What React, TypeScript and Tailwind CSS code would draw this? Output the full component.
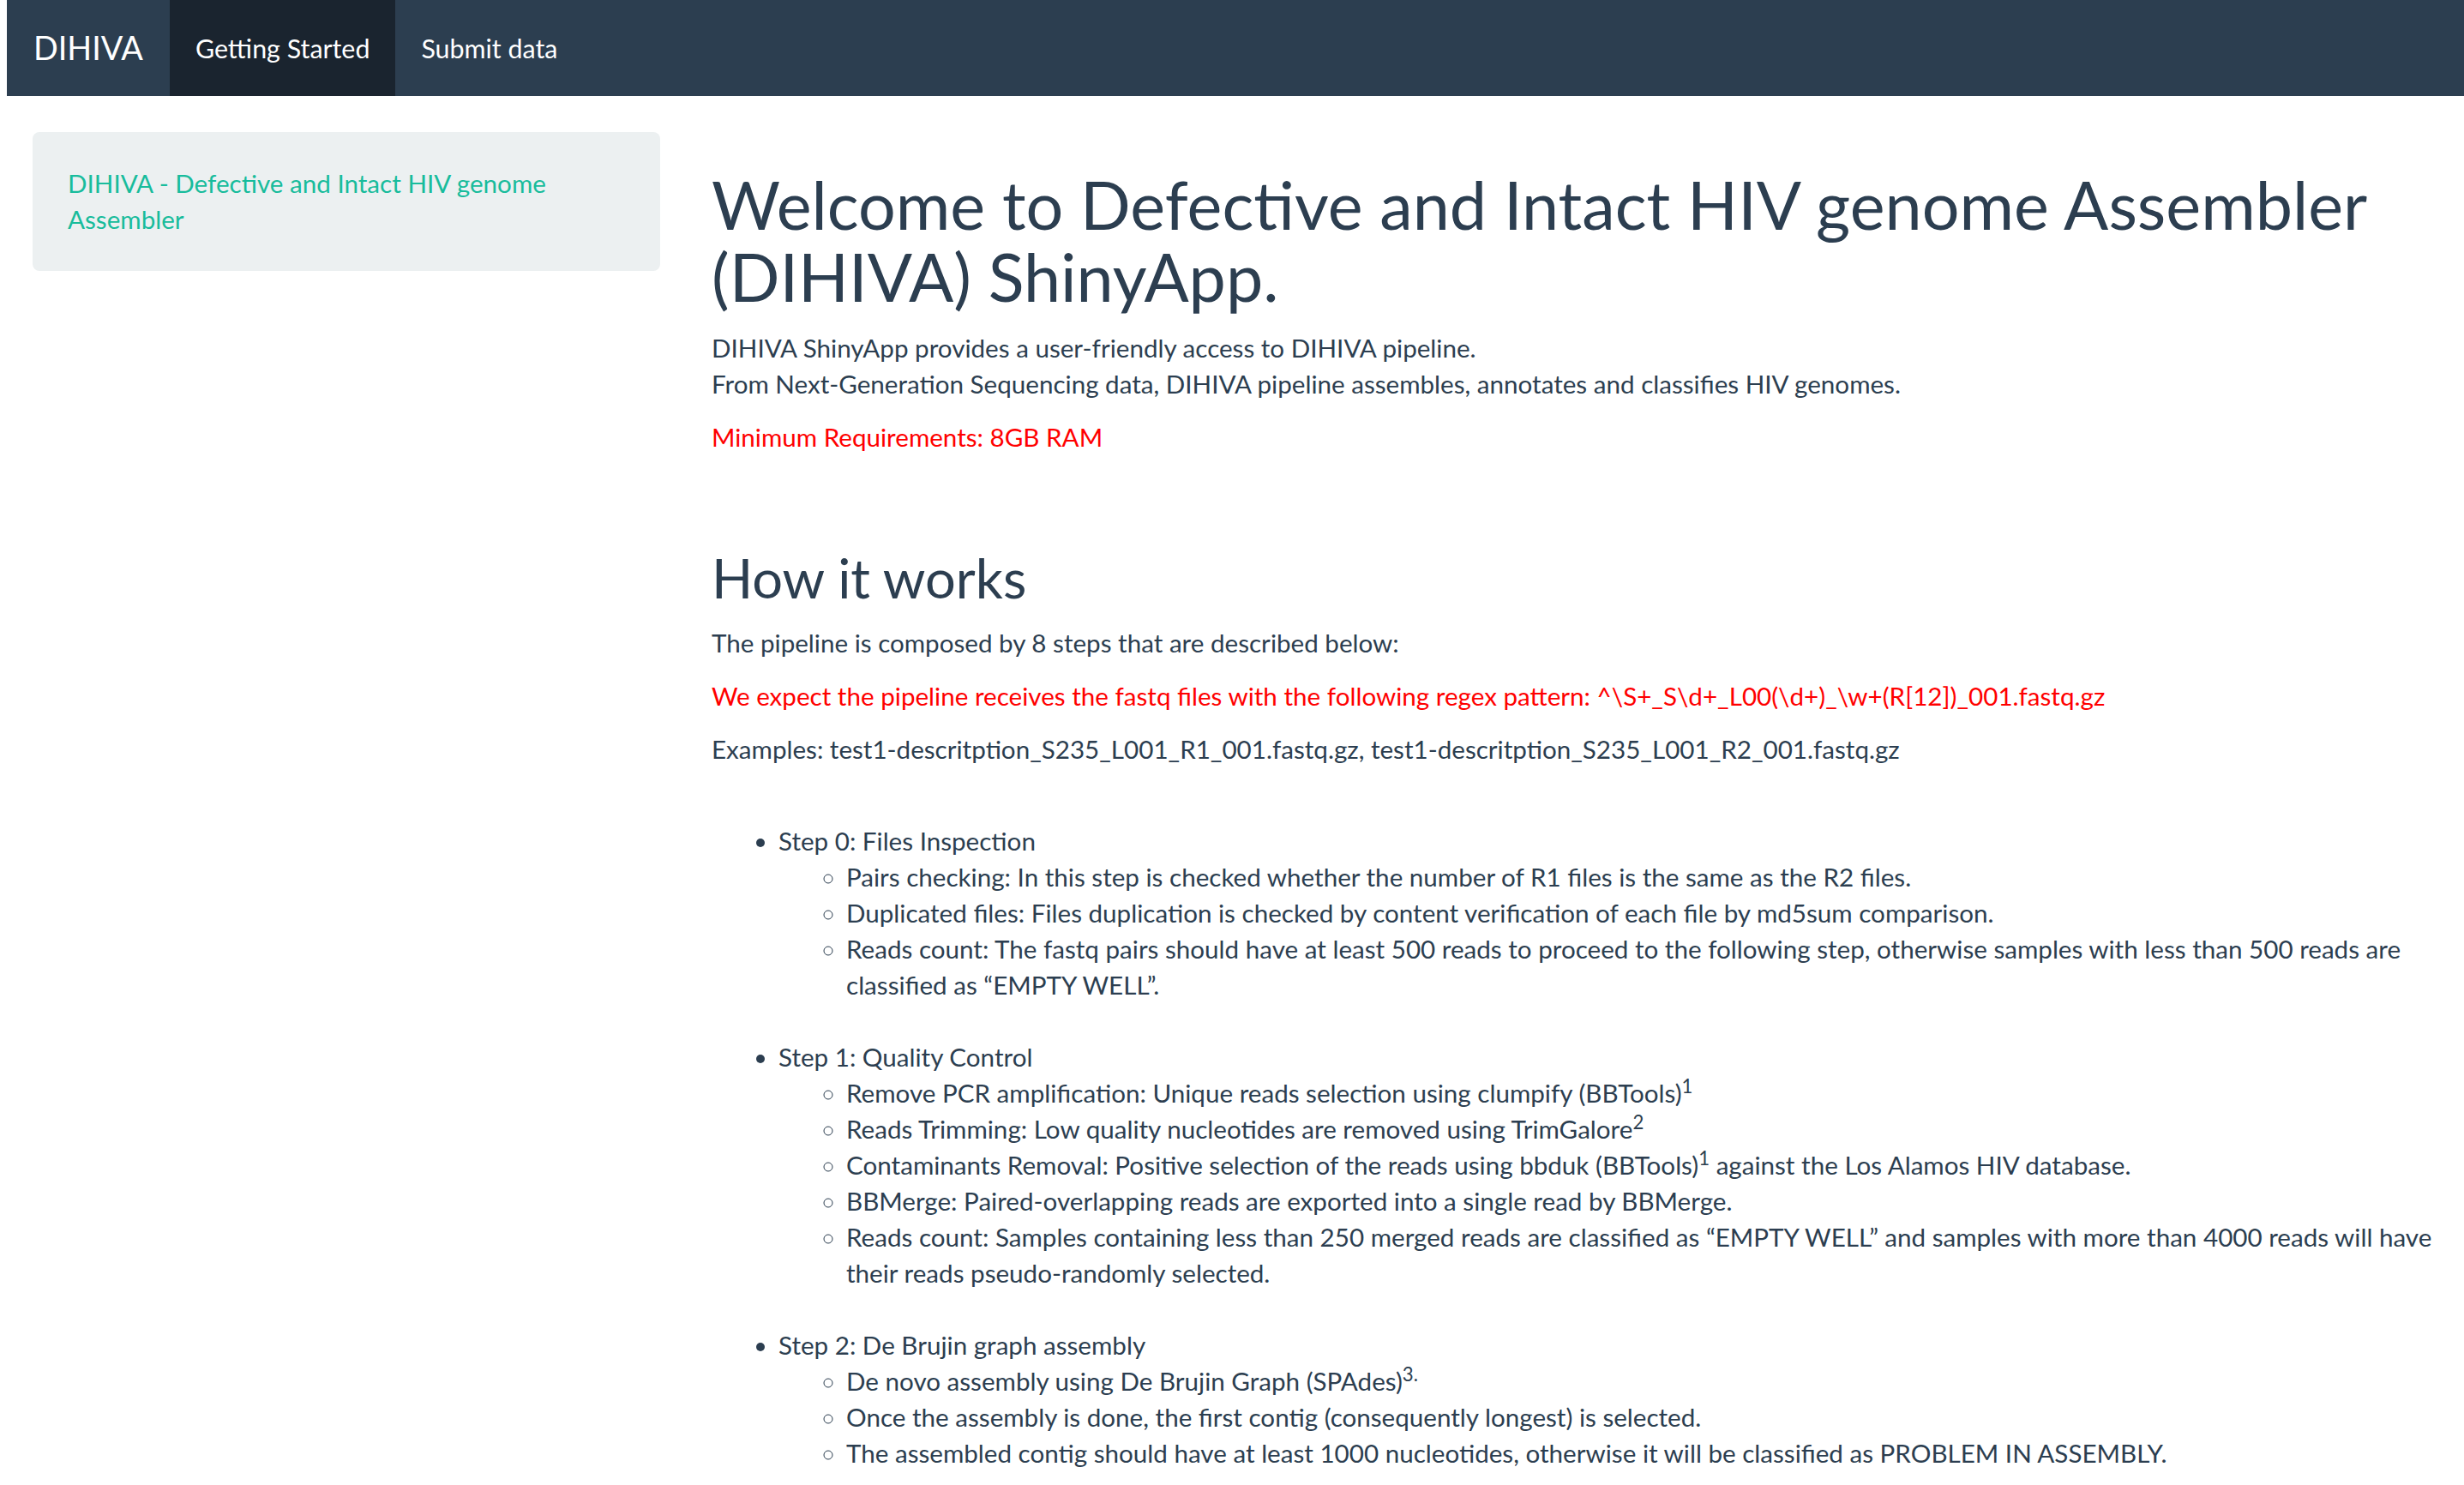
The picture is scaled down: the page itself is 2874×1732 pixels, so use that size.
export default function App() {
  const regex = "^\\S+_S\\d+_L00(\\d+)_\\w+(R[12])_001.fastq.gz";
  return (
    <div className="min-h-screen bg-white pl-[8px] font-['Lato','Helvetica_Neue',Helvetica,Arial,sans-serif] text-[29.6px] leading-[42px] text-[#2c3e50]">
      <nav className="flex h-[112px] bg-[#2c3e50] text-white">
        <a className="flex items-center pl-[31px] pr-[31px] text-[37.8px] leading-[42px]">DIHIVA</a>
        <a className="flex items-center bg-[#1a242f] px-[30px] text-[30.4px]">Getting Started</a>
        <a className="flex items-center px-[30px] text-[30.4px]">Submit data</a>
      </nav>
      <div className="flex pt-[42px]">
        <aside className="ml-[30px] w-[732px] shrink-0">
          <div className="rounded-[8px] bg-[#ecf0f1] py-[39px] pl-[41px] pr-[37px] text-[#18bc9c]">
            DIHIVA - Defective and Intact HIV genome Assembler
          </div>
        </aside>
        <main className="ml-[60px] w-[2034px] shrink-0">
          <h1 className="mt-[42px] mb-[21px] text-[77.3px] leading-[84px] font-normal">
            Welcome to Defective and Intact HIV genome Assembler (DIHIVA) ShinyApp.
          </h1>
          <p className="mb-[20px]">
            DIHIVA ShinyApp provides a user-friendly access to DIHIVA pipeline.
            <br />
            From Next-Generation Sequencing data, DIHIVA pipeline assembles, annotates and classifies HIV genomes.
          </p>
          <p className="text-[#ff0000]">Minimum Requirements: 8GB RAM</p>
          <h2 className="mt-[108px] mb-[21px] text-[63.2px] leading-[69px] font-normal">How it works</h2>
          <p className="mb-[20px]">The pipeline is composed by 8 steps that are described below:</p>
          <p className="mb-[20px] text-[#ff0000]">
            We expect the pipeline receives the fastq files with the following regex pattern: {regex}
          </p>
          <p>
            Examples: test1-descritption_S235_L001_R1_001.fastq.gz, test1-descritption_S235_L001_R2_001.fastq.gz
          </p>
          <ul className="mt-[65px] list-disc pl-[78px]">
            <li>
              Step 0: Files Inspection
              <ul className="list-[circle] pl-[79px]">
                <li>Pairs checking: In this step is checked whether the number of R1 files is the same as the R2 files.</li>
                <li>Duplicated files: Files duplication is checked by content verification of each file by md5sum comparison.</li>
                <li>
                  Reads count: The fastq pairs should have at least 500 reads to proceed to the following step, otherwise samples with less than 500 reads are classified as “EMPTY WELL”.
                </li>
              </ul>
            </li>
            <li className="mt-[42px]">
              Step 1: Quality Control
              <ul className="list-[circle] pl-[79px]">
                <li>
                  Remove PCR amplification: Unique reads selection using clumpify (BBTools)<sup>1</sup>
                </li>
                <li>
                  Reads Trimming: Low quality nucleotides are removed using TrimGalore<sup>2</sup>
                </li>
                <li>
                  Contaminants Removal: Positive selection of the reads using bbduk (BBTools)<sup>1</sup> against the Los Alamos HIV database.
                </li>
                <li>BBMerge: Paired-overlapping reads are exported into a single read by BBMerge.</li>
                <li>
                  Reads count: Samples containing less than 250 merged reads are classified as “EMPTY WELL” and samples with more than 4000 reads will have their reads pseudo-randomly selected.
                </li>
              </ul>
            </li>
            <li className="mt-[42px]">
              Step 2: De Brujin graph assembly
              <ul className="list-[circle] pl-[79px]">
                <li>
                  De novo assembly using De Brujin Graph (SPAdes)<sup>3.</sup>
                </li>
                <li>Once the assembly is done, the first contig (consequently longest) is selected.</li>
                <li>The assembled contig should have at least 1000 nucleotides, otherwise it will be classified as PROBLEM IN ASSEMBLY.</li>
              </ul>
            </li>
          </ul>
        </main>
      </div>
    </div>
  );
}
